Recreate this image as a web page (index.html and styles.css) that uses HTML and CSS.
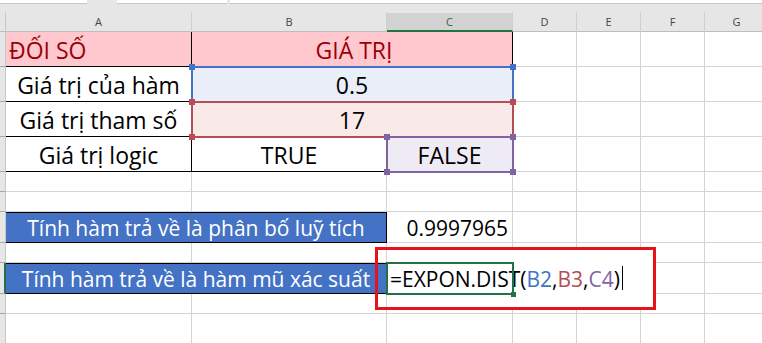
FILE: index.html
```html
<!DOCTYPE html>
<html lang="vi">
<head>
<meta charset="utf-8">
<title>EXPON.DIST</title>
<link rel="stylesheet" href="styles.css">
</head>
<body>
<div class="topbar">
  <div class="tb tb1"></div>
  <div class="tb tb2"></div>
  <div class="tb tb3"></div>
</div>
<div class="sheet">
  <div class="corner"></div>
  <div class="ch">A</div>
  <div class="ch">B</div>
  <div class="ch sel">C</div>
  <div class="ch">D</div>
  <div class="ch">E</div>
  <div class="ch">F</div>
  <div class="ch">G</div>

  <div class="rh"></div>
  <div class="c bk pink left">ĐỐI SỐ</div>
  <div class="c bk pink ctr s2 gia">GIÁ TRỊ</div>
  <div class="c"></div><div class="c"></div><div class="c"></div><div class="c"></div>

  <div class="rh"></div>
  <div class="c bk ctr">Giá trị của hàm</div>
  <div class="c bk ctr s2 ref-blue">0.5<div class="ov ov-blue"><span class="h tl"></span><span class="h tr"></span><span class="h bl"></span><span class="h br"></span></div></div>
  <div class="c"></div><div class="c"></div><div class="c"></div><div class="c"></div>

  <div class="rh"></div>
  <div class="c bk ctr">Giá trị tham số</div>
  <div class="c bk ctr s2 ref-red">17<div class="ov ov-red"><span class="h tl"></span><span class="h tr"></span><span class="h bl"></span><span class="h br"></span></div></div>
  <div class="c"></div><div class="c"></div><div class="c"></div><div class="c"></div>

  <div class="rh"></div>
  <div class="c bk ctr">Giá trị logic</div>
  <div class="c bk ctr">TRUE</div>
  <div class="c bk ctr ref-purple">FALSE<div class="ov ov-purple"><span class="h tl"></span><span class="h tr"></span><span class="h bl"></span><span class="h br"></span></div></div>
  <div class="c"></div><div class="c"></div><div class="c"></div><div class="c"></div>

  <div class="rh"></div>
  <div class="c"></div><div class="c"></div><div class="c"></div><div class="c"></div><div class="c"></div><div class="c"></div><div class="c"></div>

  <div class="rh"></div>
  <div class="c"></div><div class="c"></div><div class="c"></div><div class="c"></div><div class="c"></div><div class="c"></div><div class="c"></div>

  <div class="rh"></div>
  <div class="c band ctr s2">Tính hàm trả về là phân bố luỹ tích</div>
  <div class="c right small">0.9997965</div>
  <div class="c"></div><div class="c"></div><div class="c"></div><div class="c"></div>

  <div class="rh"></div>
  <div class="c"></div><div class="c"></div><div class="c"></div><div class="c"></div><div class="c"></div><div class="c"></div><div class="c"></div>

  <div class="rh sel"></div>
  <div class="c band ctr s2">Tính hàm trả về là hàm mũ xác suất</div>
  <div class="c edit">
    <div class="callout"></div>
    <span class="formula">=EXPON.DIST(<span class="r-blue">B2</span>,<span class="r-red">B3</span>,<span class="r-purple">C4</span>)<span class="caret"></span></span>
    <div class="ov ov-green"><span class="h br"></span></div>
  </div>
  <div class="c"></div><div class="c"></div><div class="c"></div><div class="c"></div>

  <div class="rh"></div>
  <div class="c"></div><div class="c"></div><div class="c"></div><div class="c"></div><div class="c"></div><div class="c"></div><div class="c"></div>

  <div class="rh"></div>
  <div class="c"></div><div class="c"></div><div class="c"></div><div class="c"></div><div class="c"></div><div class="c"></div><div class="c"></div>
</div>
</body>
</html>
```
FILE: styles.css
```css
* { box-sizing: border-box; }
html, body { margin: 0; padding: 0; }
body {
  width: 762px;
  height: 343px;
  overflow: hidden;
  background: #fff;
  font-family: "Open Sans", "Noto Sans", sans-serif;
}
.topbar {
  height: 12px;
  background: #e6e6e6;
  display: flex;
  align-items: flex-start;
}
.tb {
  height: 4px;
  background: #fff;
  border-bottom: 1px solid #c6c6c6;
}
.tb1 { width: 87px; margin-right: 30px; }
.tb2 { width: 110px; margin-right: 3px; }
.tb3 { flex: 1; }

.sheet {
  display: grid;
  grid-template-columns: 6px 186px 195px 126px 64px 64px 64px 64px;
  grid-template-rows: 20px 35px 35px 35px 35px 20px 20px 31px 20px 31px 20px 30px;
  width: 769px;
}
.corner {
  background: #e6e6e6;
  border-right: 1px solid #c8c8c8;
  border-bottom: 1px solid #bdbdbd;
}
.ch {
  background: #e6e6e6;
  border-right: 1px solid #cfcfcf;
  border-bottom: 1px solid #bdbdbd;
  font-size: 11px;
  color: #444;
  display: flex;
  align-items: center;
  justify-content: center;
}
.ch.sel {
  background: #d2d2d2;
  border-top: 1px solid #e6e6e6;
  border-bottom: 2px solid #217346;
  color: #2b6a47;
}
.rh {
  background: #e6e6e6;
  border-right: 1px solid #c8c8c8;
  border-bottom: 1px solid #a8a8a8;
}
.rh.sel { border-right: 2px solid #217346; }

.c {
  border-right: 1px solid #d4d4d4;
  border-bottom: 1px solid #d4d4d4;
  display: flex;
  align-items: flex-end;
  white-space: nowrap;
  font-size: 23px;
  color: #000;
  min-width: 0;
}
.s2 { grid-column: span 2; }
.bk { border-right-color: #000; border-bottom-color: #000; }
.ctr { justify-content: center; }
.left { padding-left: 3px; }
.right { justify-content: flex-end; padding-right: 4px; }
.pink { background: #ffc7ce; color: #9c0006; }
.gia { padding-left: 4px; }
.small { font-size: 21px; }

.band {
  background: #4472c4;
  color: #fff;
  font-size: 21px;
  border-top: 1px solid #000;
  border-bottom-color: #000;
  border-right-color: #000;
}

.ref-blue { background: #e9eef8; position: relative; }
.ref-red { background: #f9e9e9; position: relative; }
.ref-purple { background: #efebf5; position: relative; }

.ov {
  position: absolute;
  top: -1px;
  left: -1px;
  right: -2px;
  bottom: -2px;
  border: 2px solid;
}
.ov-blue { border-color: #4472c4; }
.ov-red { border-color: #b54d55; }
.ov-purple { border-color: #8064a2; }
.ov-green { border-color: #217346; }
.h {
  position: absolute;
  width: 6px;
  height: 6px;
}
.ov-blue .h { background: #4472c4; }
.ov-red .h { background: #b54d55; }
.ov-purple .h { background: #8064a2; }
.tl { top: -4px; left: -4px; }
.tr { top: -4px; right: -4px; }
.bl { bottom: -4px; left: -4px; }
.br { bottom: -4px; right: -4px; }
.ov-green .h { background: #217346; width: 5px; height: 5px; right: -4px; bottom: -4px; }

.edit {
  position: relative;
  overflow: visible;
}
.callout {
  position: absolute;
  left: -12px;
  top: -16px;
  width: 281px;
  height: 63px;
  border: 3px solid #e3151a;
  background: linear-gradient(90deg, transparent 9px, #fff 9px) padding-box;
}
.formula {
  position: relative;
  padding-left: 3px;
  font-size: 21px;
  color: #000;
  display: flex;
  align-items: flex-end;
}
.r-blue { color: #4472c4; }
.r-red { color: #b54d55; }
.r-purple { color: #8064a2; }
.caret {
  display: inline-block;
  width: 1px;
  height: 24px;
  background: #000;
  margin-left: 2px;
  margin-bottom: 3px;
  align-self: flex-end;
}
```
